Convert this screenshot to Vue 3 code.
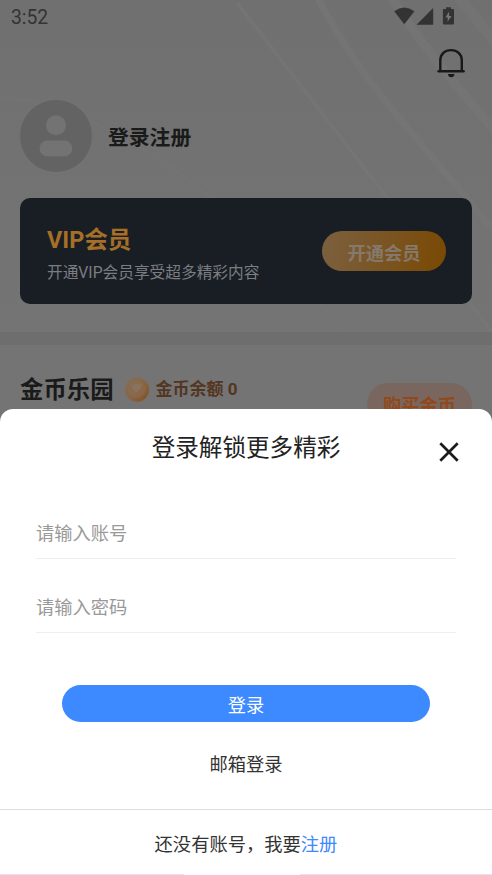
<script setup>
import { ref } from 'vue'

const fields = ref([
  { key: 'account', type: 'text', placeholder: '请输入账号', value: '' },
  { key: 'password', type: 'password', placeholder: '请输入密码', value: '' },
])
</script>

<template>
  <main class="screen">
    <section class="profile">
      <svg class="streaks" viewBox="0 0 492 332" aria-hidden="true">
        <g fill="none" stroke="#777">
          <path d="M237 3L382 191L492 332" stroke-width="4" opacity=".5" />
          <path d="M316-5Q350 60 405 125T510 250" stroke-width="7" opacity=".65" />
          <path d="M390-5Q420 45 505 143" stroke-width="9" opacity=".65" />
          <path d="M457-5L500 48" stroke-width="11" opacity=".55" />
          <path d="M-5 96Q105 105 225 210T340 340" stroke-width="4" opacity=".25" />
        </g>
      </svg>
      <header class="status">
        <span>3:52</span>
        <svg width="61" height="20" viewBox="0 0 61 20" fill="#333">
          <path d="M.2 5.200Q10.300-2.200 20.400 5.200L10.300 18.200Z" />
          <path d="M22.500 18.700H39.200V2Z" />
          <path d="M49 3H52V1.300H57V3H59.200Q60 3 60 4V17.400Q60 18.400 59 18.400H49.900Q48.900 18.400 48.900 17.400V4Q48.900 3 49.900 3Z" />
          <path d="M55.200 5.600L51.400 11.400H53.900L53.500 15.800L57.600 9.900H55Z" fill="#777" />
        </svg>
      </header>
      <div class="tools">
        <svg width="28" height="30" viewBox="0 0 28 30">
          <path d="M3.300 23V12.500C3.300 6 7.900 2.100 14 2.100S24.800 6 24.800 12.500V23" fill="none" stroke="#181818" stroke-width="2.400" />
          <path d="M1.700 23.300H26.500" stroke="#181818" stroke-width="2.600" stroke-linecap="round" />
          <path d="M11 26H17.400Q17 29.300 14.200 29.300T11 26Z" fill="#181818" />
        </svg>
      </div>
      <div class="user">
        <svg width="72" height="72" viewBox="0 0 72 72">
          <circle cx="36" cy="36" r="36" fill="#636363" />
          <circle cx="36" cy="25.300" r="10" fill="#737373" />
          <rect x="19.500" y="40.500" width="32.800" height="15.800" rx="7.900" fill="#737373" />
        </svg>
        <strong>登录注册</strong>
      </div>
      <div class="vip">
        <div class="vip-text">
          <h2>VIP会员</h2>
          <p>开通VIP会员享受超多精彩内容</p>
        </div>
        <button class="vip-button">开通会员</button>
      </div>
    </section>

    <section class="coins">
      <h2>金币乐园</h2>
      <svg width="26" height="26" viewBox="0 0 26 26">
        <defs>
          <linearGradient id="coin" x1="0" y1="0" x2="1" y2="1">
            <stop stop-color="#80715f" />
            <stop offset=".55" stop-color="#876442" />
            <stop offset="1" stop-color="#82501e" />
          </linearGradient>
        </defs>
        <circle cx="13" cy="12.500" r="12.200" fill="url(#coin)" />
        <circle cx="12.500" cy="12" r="9" fill="#8a6d52" opacity=".6" />
        <path d="M8 8.500L11.500 6.500L18 7.500L16 12.500L12 15.500L8 11.500Z" fill="#8f8172" opacity=".4" />
      </svg>
      <span class="balance">金币余额 0</span>
      <button class="buy">购买金币</button>
    </section>

    <section class="sheet">
      <header class="sheet-head">
        <h1>登录解锁更多精彩</h1>
        <button class="close" aria-label="关闭">
          <svg width="20" height="20" viewBox="0 0 20 20">
            <path d="M1.300 1.300L18.700 18.700M18.700 1.300L1.300 18.700" stroke="#1c1c1c" stroke-width="2.700" />
          </svg>
        </button>
      </header>
      <form class="form" @submit.prevent>
        <input v-for="field in fields" :key="field.key" v-model="field.value" :type="field.type" :placeholder="field.placeholder" />
        <button class="login">登录</button>
        <button class="email" type="button">邮箱登录</button>
      </form>
      <footer class="register">还没有账号，我要<a>注册</a></footer>
      <div class="edge"><i></i><i></i></div>
    </section>
  </main>
</template>

<style>
body {
  overflow: hidden;
}
</style>

<style scoped>
* {
  box-sizing: border-box;
}
h1, h2, p {
  margin: 0;
}
button, input {
  padding: 0;
  border: 0;
  outline: 0;
  background: none;
  font-family: inherit;
}
.screen {
  position: relative;
  width: 492px;
  height: 875px;
  overflow: hidden;
  background: #747474;
  color: #1a1a1a;
  font-family: Roboto, "Noto Sans CJK SC", sans-serif;
}
.profile {
  position: relative;
  height: 345px;
  border-bottom: 13px solid #6e6e6e;
  background: linear-gradient(#707070, #747474);
}
.streaks {
  position: absolute;
  top: 0;
  left: 0;
  width: 492px;
  height: 332px;
}
.status, .tools, .user, .vip {
  position: relative;
  display: flex;
}
.status {
  height: 35px;
  padding: 6px 37px 0 11px;
  justify-content: space-between;
  color: #333;
  font-size: 19.300px;
  line-height: 23px;
}
.tools {
  height: 65px;
  padding: 13px 27px 0;
  justify-content: flex-end;
}
.user {
  height: 98px;
  padding-left: 20px;
  gap: 16px;
}
.user strong {
  font-size: 20.800px;
  line-height: 76px;
}
.vip {
  height: 106px;
  margin: 0 20px;
  padding: 0 26px 0 27px;
  justify-content: space-between;
  border-radius: 10px;
  background: #191e25;
}
.vip-text {
  padding-top: 26px;
}
.vip h2 {
  color: #a66f28;
  font-size: 23.500px;
  line-height: 33px;
}
.vip p {
  color: #7b7d80;
  font-size: 15.700px;
  line-height: 32px;
}
.vip-button {
  width: 124px;
  height: 40px;
  margin-top: 33px;
  border-radius: 20px;
  background: linear-gradient(100deg, #7b6040, #7a4903);
  color: #85796c;
  font-size: 18.300px;
  font-weight: 700;
  padding-top: 1px;
}
.coins {
  display: flex;
  align-items: flex-start;
  padding: 32px 20px 0;
}
.coins h2 {
  margin-right: 10px;
  font-size: 23.400px;
  line-height: 27px;
}
.balance {
  margin-left: 6px;
  color: #533621;
  font-size: 17px;
  font-weight: 700;
  line-height: 25px;
}
.buy {
  width: 105px;
  height: 42px;
  margin: 6px 0 0 auto;
  border-radius: 21px;
  background: #79675f;
  color: #91491c;
  font-size: 18.300px;
  font-weight: 700;
}
.sheet {
  position: absolute;
  inset: 409px 0 0;
  border-radius: 13px 13px 0 0;
  background: #fff;
}
.sheet-head {
  display: grid;
  grid-template-columns: 1fr auto 1fr;
  height: 96px;
}
.sheet-head h1 {
  grid-column: 2;
  color: #222;
  font-size: 23.600px;
  font-weight: 400;
  line-height: 79px;
}
.close {
  display: flex;
  width: 20px;
  height: 20px;
  margin: 33px 33px 0 0;
  justify-self: end;
}
.form {
  display: flex;
  flex-direction: column;
  height: 304px;
  padding: 0 36px;
}
.form input {
  height: 54px;
  margin-bottom: 19.500px;
  padding-top: 4px;
  border-bottom: 1px solid #eee;
  font-size: 18.300px;
  color: #333;
}
.form input::placeholder {
  color: #999;
}
.login {
  height: 37px;
  margin: 33px 26px 0;
  border-radius: 19px;
  background: #3d89ff;
  color: #fff;
  font-size: 18.300px;
}
.email {
  align-self: center;
  margin-top: 29px;
  color: #333;
  font-size: 18.300px;
  line-height: 28px;
}
.register {
  height: 65px;
  border-top: 1px solid #ddd;
  color: #333;
  font-size: 18.300px;
  line-height: 69px;
  text-align: center;
}
.register a {
  color: #3d89ff;
}
.edge {
  display: flex;
  justify-content: space-between;
}
.edge i {
  width: 184px;
  height: 1px;
  background: #e5e5e5;
}
.edge i + i {
  width: 192px;
}
</style>
